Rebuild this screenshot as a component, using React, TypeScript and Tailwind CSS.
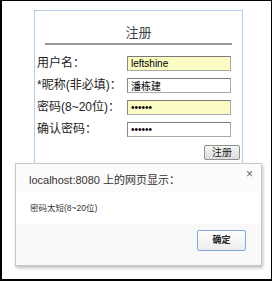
import { useState } from "react";

const cjk = "font-['Liberation_Sans','Noto_Sans_CJK_SC',sans-serif]";

function Field({ label, value, type, autofill }: { label: string; value: string; type: string; autofill?: boolean }) {
  return (
    <div className="flex items-center h-[22px]">
      <label className="w-[92px] pl-[2px] text-[12px] text-[#222] leading-none">{label}</label>
      <input
        type={type}
        defaultValue={value}
        className={`w-[104px] h-[15px] px-[3px] text-[10px] leading-none text-black outline-none border border-[#a9a9a9] border-t-[#7a7a7a] border-l-[#8a8a8a] ${
          autofill ? "bg-[#fbfbc4]" : "bg-white"
        }`}
      />
    </div>
  );
}

export default function App() {
  const [open, setOpen] = useState(true);

  return (
    <div className={`relative w-[272px] h-[281px] bg-white border-black border-l-2 border-t border-r border-b-2 overflow-hidden ${cjk}`}>
      <div className="ml-[32px] mt-[9px] w-[209px] h-[170px] border border-[#b0cdea] bg-white">
        <div className="h-[32px] flex items-end justify-center pb-[4px] text-[13px] text-[#444] leading-none">注册</div>
        <div className="mx-[10px] h-[2px] bg-[#9a9a9a]" />
        <div className="mt-[7px] flex flex-col">
          <Field label="用户名：" value="leftshine" type="text" autofill />
          <Field label="*昵称(非必填)：" value="潘栋建" type="text" />
          <Field label="密码(8~20位)：" value="123456" type="password" autofill />
          <Field label="确认密码：" value="123456" type="password" />
        </div>
        <div className="flex justify-end pr-[2px] mt-[5px]">
          <button className="w-[36px] h-[15px] text-[10px] leading-none text-[#222] border border-[#8f8f8f] rounded-[2px] bg-gradient-to-b from-[#f6f6f6] to-[#dcdcdc]">
            注册
          </button>
        </div>
      </div>

      {open && (
        <div className="absolute left-[13px] top-[162px] w-[247px] h-[103px] flex flex-col bg-white border border-[#c8c8c8] shadow-[1px_2px_3px_rgba(0,0,0,0.25)]">
          <div className="relative h-[29px] bg-[#fbfbfb] flex items-end pl-[13px] pb-[7px]">
            <span className="text-[11px] text-[#333] leading-none">localhost:8080 上的网页显示：</span>
            <button onClick={() => setOpen(false)} className="absolute right-[8px] top-[4px] text-[12px] text-[#666] leading-none">
              ×
            </button>
          </div>
          <div className="h-[31px] bg-white flex items-center pl-[14px] text-[8.5px] text-[#333] leading-none">
            密码太短(8~20位)
          </div>
          <div className="flex-1 bg-[#f9f9f9] flex justify-end items-start pt-[6px] pr-[15px]">
            <button
              onClick={() => setOpen(false)}
              className="w-[49px] h-[21px] text-[9px] font-bold text-[#222] leading-none border border-[#82a7e2] rounded-[2px] bg-gradient-to-b from-white to-[#ececec]"
            >
              确定
            </button>
          </div>
        </div>
      )}
    </div>
  );
}
